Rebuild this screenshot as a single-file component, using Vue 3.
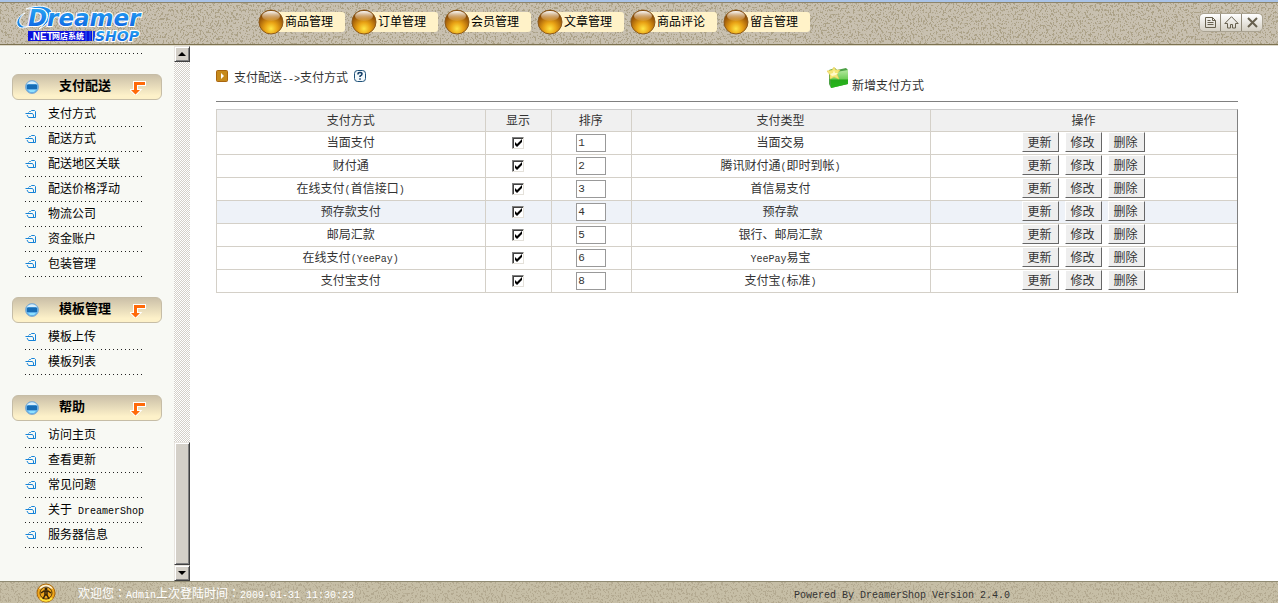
<script setup>
import { h, reactive } from 'vue'

// Sets Latin runs in a half-width face so that they keep a 1:2 rhythm with the Chinese text.
const Mixed = ({ text }) =>
  text.split(/([\x20-\x7e]+|：)/).filter(Boolean).map((run) => {
    if (run === '：') return h('span', { class: 'run-colon' }, run)
    return /^[\x20-\x7e]/.test(run) ? h('span', { class: 'run-latin' }, run) : run
  })
Mixed.props = ['text']

const nav = ['商品管理', '订单管理', '会员管理', '文章管理', '商品评论', '留言管理']

const groups = [
  { title: '支付配送', items: ['支付方式', '配送方式', '配送地区关联', '配送价格浮动', '物流公司', '资金账户', '包装管理'] },
  { title: '模板管理', items: ['模板上传', '模板列表'] },
  { title: '帮助', items: ['访问主页', '查看更新', '常见问题', '关于 DreamerShop', '服务器信息'] },
]

const rows = reactive([
  { name: '当面支付', order: '1', type: '当面交易', shown: true },
  { name: '财付通', order: '2', type: '腾讯财付通(即时到帐)', shown: true },
  { name: '在线支付(首信接口)', order: '3', type: '首信易支付', shown: true },
  { name: '预存款支付', order: '4', type: '预存款', shown: true, active: true },
  { name: '邮局汇款', order: '5', type: '银行、邮局汇款', shown: true },
  { name: '在线支付(YeePay)', order: '6', type: 'YeePay易宝', shown: true },
  { name: '支付宝支付', order: '8', type: '支付宝(标准)', shown: true },
])
const actions = ['更新', '修改', '删除']
</script>

<template>
  <div class="app">
    <header class="top">
      <svg class="texture" aria-hidden="true">
        <defs>
          <filter id="grain" x="0" y="0" width="100%" height="100%" color-interpolation-filters="sRGB">
            <feTurbulence type="fractalNoise" baseFrequency="0.6 0.45" numOctaves="2" seed="7" />
            <feColorMatrix values="0 0 0 0 0.67  0 0 0 0 0.63  0 0 0 0 0.53  12 0 0 0 -6.5" />
          </filter>
        </defs>
        <rect width="100%" height="100%" filter="url(#grain)" />
      </svg>
      <a class="logo" href="#" aria-label="Dreamer Shop">
        <svg width="134" height="40" viewBox="0 0 134 40">
          <defs>
            <linearGradient id="sky" x1="0" y1="0" x2="0" y2="1">
              <stop offset="0" stop-color="#2bb0f5" />
              <stop offset="1" stop-color="#0a5be0" />
            </linearGradient>
          </defs>
          <path d="M10 10C3 13 0 19 3 23c2 3 7 2 11 0-5 1-8 0-9-3-1-4 1-7 5-10Z" fill="#1684e4" stroke="#fff" />
          <path d="M11 6c12-5 24-3 26 3 1 6-5 13-13 17 6-6 10-12 8-16-2-4-11-5-21-4Z" fill="#1a8ceb" stroke="#fff" />
          <text class="brand" x="13" y="23" font-size="23">Dreamer</text>
          <rect x="13" y="28" width="64" height="10" fill="#0b10dc" />
          <text class="net" x="15" y="37" font-size="10">.NET</text>
          <text class="net" x="37" y="36" font-size="8">网店系统</text>
          <path d="M71 28v10M75 28v10M79 28v10" stroke="#173bea" stroke-width="2" />
          <text class="brand" x="80" y="38" font-size="14">SHOP</text>
        </svg>
      </a>
      <nav class="nav">
        <a v-for="n in nav" :key="n" href="#">
          <svg class="ball" width="26" height="26" viewBox="0 0 26 26" aria-hidden="true">
            <defs>
              <radialGradient id="amber" cx=".5" cy=".78" r=".75">
                <stop offset="0" stop-color="#ffe545" />
                <stop offset=".35" stop-color="#e9a315" />
                <stop offset=".7" stop-color="#a9640b" />
                <stop offset="1" stop-color="#6f3a06" />
              </radialGradient>
              <linearGradient id="shine" x1="0" y1="0" x2="0" y2="1">
                <stop offset="0" stop-color="#fff" />
                <stop offset="1" stop-color="#e0b070" stop-opacity=".2" />
              </linearGradient>
            </defs>
            <circle cx="13" cy="13" r="12" fill="url(#amber)" stroke="#8d5a1c" />
            <ellipse cx="13" cy="7" rx="9" ry="5" fill="url(#shine)" />
          </svg>
          <span>{{ n }}</span>
        </a>
      </nav>
      <div class="tools">
        <button type="button" aria-label="文档">
          <svg width="13" height="13" viewBox="0 0 13 13"><path d="M1.500 1.500h7l3 3v7h-10ZM8.500 1.500v3h3M3.500 4.500h3M3.500 6.500h6M3.500 8.500h6" /></svg>
        </button>
        <button type="button" aria-label="主页">
          <svg width="15" height="13" viewBox="0 0 15 13"><path d="M7.500.7.800 7.500h2.700v4.500h3v-3.500h2V12h3V7.500h2.700Z" /></svg>
        </button>
        <button type="button" aria-label="关闭">
          <svg width="13" height="13" viewBox="0 0 13 13"><path class="cross" d="m2 2 9 9M11 2l-9 9" /></svg>
        </button>
      </div>
    </header>

    <div class="body">
      <aside class="side">
        <div class="menu">
          <div class="tail"></div>
          <section v-for="g in groups" :key="g.title">
            <h2>
              <svg width="14" height="14" viewBox="0 0 14 14" aria-hidden="true">
                <circle cx="7" cy="7" r="6.500" fill="#5fb0ea" stroke="#8aaccb" />
                <path d="M2 4a6 6 0 0 1 10 0Z" fill="#d8eefb" />
                <path d="M2 5h1l1-1 1 1 1-1 1 1 1-1 1 1 1-1 1 1h1v4H2Z" fill="#176cb5" />
                <path d="M3 10h8l-2 2H5Z" fill="#8fe0ff" />
              </svg>
              <span>{{ g.title }}</span>
              <svg width="16" height="16" viewBox="0 0 16 16" aria-hidden="true">
                <path class="arrow" d="M4 3h11v3H7v5h3l-4.500 4.500L1 11h3Z" />
              </svg>
            </h2>
            <ul>
              <li v-for="i in g.items" :key="i">
                <svg width="12" height="10" viewBox="0 0 12 10" aria-hidden="true">
                  <path d="M3.500 3.500l1-1h1l1-1h3l1 1v6h-7l-1.500-2.500M.5 4.500h7l1 1.500v2" fill="none" stroke="#1583d8" />
                </svg>
                <a href="#"><Mixed :text="i" /></a>
              </li>
            </ul>
          </section>
        </div>
        <div class="scroll">
          <button type="button" aria-label="向上滚动"><svg width="8" height="4" viewBox="0 0 8 4"><path d="M4 0 8 4H0Z" /></svg></button>
          <div class="track"><div class="thumb"></div></div>
          <button type="button" aria-label="向下滚动"><svg width="8" height="4" viewBox="0 0 8 4"><path d="M0 0h8L4 4Z" /></svg></button>
        </div>
      </aside>

      <main class="main">
        <div class="heading">
          <div class="crumb">
            <svg width="12" height="12" viewBox="0 0 12 12" aria-hidden="true">
              <rect x=".5" y=".5" width="11" height="11" rx="1" fill="#c68a1c" stroke="#a9650f" />
              <path d="M5 3l3 3-3 3Z" fill="#fff" />
            </svg>
            <h1><Mixed text="支付配送-->支付方式" /></h1>
            <svg width="12" height="12" viewBox="0 0 12 12" role="img" aria-label="说明">
              <rect x=".5" y=".5" width="11" height="11" rx="3" fill="#f3f9fc" stroke="#1d5078" />
              <path d="M4 4.500V4q0-1.500 2-1.500T8 4q0 1-2 2.200V7M6 8.300v1.500" fill="none" stroke="#123c66" stroke-width="1.500" />
            </svg>
          </div>
          <a class="add" href="#">
            <svg width="22" height="23" viewBox="0 0 22 23" aria-hidden="true">
              <defs>
                <linearGradient id="leaf" x1="0" y1="0" x2="0" y2="1">
                  <stop offset="0" stop-color="#b5e9a0" /><stop offset=".5" stop-color="#6fce58" />
                  <stop offset=".55" stop-color="#28a91d" /><stop offset="1" stop-color="#25b81a" />
                </linearGradient>
              </defs>
              <path d="M2 4 8 2l2 2 9-2 2 2v14L4 22 2 18Z" fill="#4da146" />
              <path d="M3 7 21 4v14L4 22Z" fill="url(#leaf)" />
              <path d="m7 1 2 3 4 0-3 4 2 5-5-2-4 2 0-4-3-4 5-1Z" fill="#f5e677" stroke="#e8c94a" stroke-width=".5" />
              <path d="m7 4 1 3 3 0-2 2-4 1-2-2 3-1Z" fill="#fffac8" />
            </svg>
            <span>新增支付方式</span>
          </a>
        </div>

        <table>
          <colgroup>
            <col class="c-name" /><col class="c-show" /><col class="c-order" /><col class="c-type" /><col class="c-act" />
          </colgroup>
          <thead>
            <tr><th>支付方式</th><th>显示</th><th>排序</th><th>支付类型</th><th>操作</th></tr>
          </thead>
          <tbody>
            <tr v-for="r in rows" :key="r.name" :class="{ active: r.active }">
              <td><Mixed :text="r.name" /></td>
              <td class="field"><input v-model="r.shown" type="checkbox" :aria-label="r.name + ' 显示'" /></td>
              <td class="field"><input v-model="r.order" type="text" :aria-label="r.name + ' 排序'" /></td>
              <td><Mixed :text="r.type" /></td>
              <td><div class="acts"><button v-for="a in actions" :key="a" type="button">{{ a }}</button></div></td>
            </tr>
          </tbody>
        </table>
      </main>
    </div>

    <footer class="foot">
      <svg class="texture" aria-hidden="true"><rect width="100%" height="100%" filter="url(#grain)" /></svg>
      <div class="welcome">
        <svg width="20" height="20" viewBox="0 0 20 20" aria-hidden="true">
          <circle cx="10" cy="10" r="9" fill="#eda61c" stroke="#a9660b" />
          <path d="M3 6a8 8 0 0 1 14 0q-7-3-14 0Z" fill="#fff0cf" />
          <path d="M4 15a8 8 0 0 0 12 0" fill="none" stroke="#ffe23c" stroke-width="2" />
          <circle cx="10" cy="10" r="6" fill="none" stroke="#5a3c0c" />
          <circle cx="10" cy="6" r="1.500" fill="#342208" />
          <path d="M5 10l3-2h4l3 2M9 8h2v4H9ZM9 12l-2 4M11 12l2 4" fill="none" stroke="#342208" stroke-width="1.500" />
        </svg>
        <span><Mixed text="欢迎您：Admin上次登陆时间：2009-01-31 11:30:23" /></span>
      </div>
      <div class="power"><Mixed text="Powered By DreamerShop Version 2.4.0" /></div>
    </footer>
  </div>
</template>

<style>
body {
  background: #fff;
}
.run-latin {
  font-family: "Liberation Mono", monospace;
  font-size: 10px;
  line-height: 1;
  white-space: pre;
}
.run-colon {
  font-family: "Noto Sans CJK TC", sans-serif;
}
</style>

<style scoped>
.app {
  display: flex;
  flex-direction: column;
  height: 100vh;
  overflow: hidden;
  font: 12px/16px "Noto Sans CJK SC", sans-serif;
  color: #000;
}
a {
  color: inherit;
  text-decoration: none;
}
button {
  padding: 0;
  font: inherit;
}
h1,
h2,
ul {
  margin: 0;
  padding: 0;
  font: inherit;
  list-style: none;
}
svg {
  display: block;
  flex: none;
}
.texture {
  position: absolute;
  top: 0;
  left: 0;
  width: 100%;
  height: 100%;
  z-index: -1;
}

.top {
  position: relative;
  z-index: 0;
  display: flex;
  flex: none;
  box-sizing: border-box;
  height: 46px;
  padding: 1px 15px 0;
  background: #c8c0b0;
  border-top: 2px solid #a9c3e8;
  border-bottom: 1px solid #ddd8ca;
  box-shadow: inset 0 1px #8d846a, inset 0 -1px #7c7250;
}
.top .texture {
  top: 1px;
  height: calc(100% - 2px);
}
.logo {
  width: 243px;
}
.brand {
  font-family: "DejaVu Sans", sans-serif;
  font-weight: bold;
  font-style: italic;
  fill: url(#sky);
  stroke: #fff;
  stroke-width: 2px;
  paint-order: stroke;
}
.net {
  font-family: "Liberation Sans", "Noto Sans CJK SC", sans-serif;
  font-weight: bold;
  fill: #fff;
}
.nav {
  display: flex;
  gap: 6px;
  padding-top: 9px;
}
.nav a {
  display: flex;
  align-items: center;
  gap: 1px;
  width: 87px;
  height: 20px;
  line-height: 18px;
  background: linear-gradient(90deg, transparent 12px, #fff2c8 12px);
  border-radius: 3px;
}
.nav span {
  height: 20px;
}
.tools {
  display: flex;
  align-self: flex-start;
  margin: 10px 0 0 auto;
  border: 1px solid #aaa392;
  border-radius: 5px;
  overflow: hidden;
}
.tools button {
  display: grid;
  place-items: center;
  width: 20px;
  height: 17px;
  border: 0;
  background: linear-gradient(#fff, #d4cfc3);
}
.tools button + button {
  width: 21px;
  border-left: 1px solid #8f8979;
}
.tools path {
  fill: none;
  stroke: #67604f;
}
.tools .cross {
  stroke-width: 2px;
}

.body {
  display: flex;
  flex: 1;
  min-height: 0;
}
.side {
  display: flex;
  flex: none;
  width: 190px;
  background: #f8f9f4;
}
.menu {
  flex: 1;
  padding: 0 12px;
  overflow: hidden;
}
.tail,
.menu li {
  background: repeating-linear-gradient(90deg, #222 0 1px, transparent 1px 4px) bottom / 100% 1px no-repeat;
}
.tail {
  height: 8px;
  margin: 0 19px 20px 13px;
}
.menu section {
  margin-bottom: 20px;
}
.menu h2 {
  display: flex;
  align-items: center;
  box-sizing: border-box;
  height: 26px;
  padding: 0 15px 0 12px;
  border: 1px solid #c6bda6;
  border-radius: 6px;
  background: linear-gradient(#cbc0a8, #fdf1c9 85%);
  font-size: 13px;
  font-weight: bold;
}
.menu h2 span {
  flex: 1;
  padding: 0 0 4px 20px;
}
.arrow {
  fill: #ff6a0a;
  stroke: #fff;
  stroke-width: 2px;
  paint-order: stroke;
}
.menu ul {
  margin: 2px 19px 0 13px;
}
.menu li {
  display: flex;
  align-items: center;
  box-sizing: border-box;
  gap: 11px;
  height: 25px;
  padding-bottom: 2px;
  white-space: nowrap;
}
.menu li a {
  padding-bottom: 2px;
}
.scroll {
  display: flex;
  flex-direction: column;
  width: 16px;
}
.scroll button,
.thumb {
  box-sizing: border-box;
  border: 1px solid;
  border-color: #e8e5df #404040 #404040 #e8e5df;
  background: #d4d0c8;
  box-shadow: inset 1px 1px #fff, inset -1px -1px #808080;
}
.scroll button {
  display: grid;
  place-items: center;
  height: 16px;
}
.track {
  display: flex;
  flex: 1;
  flex-direction: column;
  justify-content: flex-end;
  background: repeating-conic-gradient(#d4d0c8 0 25%, #fff 0 50%) 0 0 / 2px 2px;
}
.thumb {
  height: 24.5%;
}

.main {
  flex: 1;
  padding: 14px 40px 0 26px;
  color: #333;
}
.heading {
  display: grid;
  grid-template-columns: 611fr 411fr;
  height: 41px;
  margin-bottom: 7px;
  border-bottom: 1px solid #808080;
}
.crumb {
  display: flex;
  align-items: center;
  align-self: start;
  gap: 6px;
  padding-top: 6px;
}
.crumb h1 {
  padding-top: 3px;
}
.add {
  display: flex;
  align-items: flex-start;
  gap: 3px;
  padding-top: 6px;
}
.add span {
  padding-top: 11px;
}
table {
  width: 100%;
  table-layout: fixed;
  border-spacing: 0;
  border-top: 1px solid #ccc;
  border-right: 1px solid #808080;
  border-left: 1px solid #d4d0c8;
}
.c-name { width: 26.4%; }
.c-show { width: 6.4%; }
.c-order { width: 7.9%; }
.c-type { width: 29.3%; }
th,
td {
  box-sizing: border-box;
  height: 23px;
  padding: 0 1px 2px 0;
  border-right: 1px solid #d4d0c8;
  border-bottom: 1px solid #d4d0c8;
  font-weight: normal;
  line-height: 16px;
  text-align: center;
  vertical-align: middle;
}
th {
  height: 22px;
  background: #f0f0f0;
}
th:last-child,
td:last-child {
  border-right: 0;
}
.field {
  padding: 0;
}
.active {
  background: #eef2f8;
}
input {
  display: block;
  box-sizing: border-box;
  margin: 0 auto;
}
input[type="text"] {
  width: 30px;
  height: 18px;
  padding: 0 1px;
  border: 1px solid #999;
  background: #fff;
  color: #333;
  font: 11px/14px "Liberation Mono", monospace;
}
input[type="checkbox"] {
  appearance: none;
  width: 12px;
  height: 12px;
  border: 1px solid;
  border-color: #808080 #e4e1da #e4e1da #808080;
  background: #fff;
  box-shadow: inset 1px 1px #404040;
}
input[type="checkbox"]:checked {
  background: #fff url("data:image/svg+xml,%3Csvg xmlns='http://www.w3.org/2000/svg' viewBox='0 0 10 10'%3E%3Cpath d='M2 4v3l2 2 5-5V1L4 6Z'/%3E%3C/svg%3E") center / 10px 10px;
}
.acts {
  display: flex;
  justify-content: center;
  gap: 6px;
}
.acts button {
  box-sizing: border-box;
  width: 37px;
  height: 20px;
  padding-right: 2px;
  border: 1px solid;
  border-color: #fff #666 #666 #fff;
  background: #eee;
  color: #333;
  line-height: 16px;
}

.foot {
  position: relative;
  z-index: 0;
  display: grid;
  grid-template-columns: 794fr 484fr;
  align-items: center;
  flex: none;
  box-sizing: border-box;
  height: 22px;
  background: #c6bea6;
  border-top: 1px solid #8f8a72;
}
.foot .texture {
  opacity: 0.7;
}
.welcome {
  display: flex;
  align-items: center;
  gap: 22px;
  padding-left: 36px;
  color: #fff;
}
.power {
  color: #333;
}
</style>
